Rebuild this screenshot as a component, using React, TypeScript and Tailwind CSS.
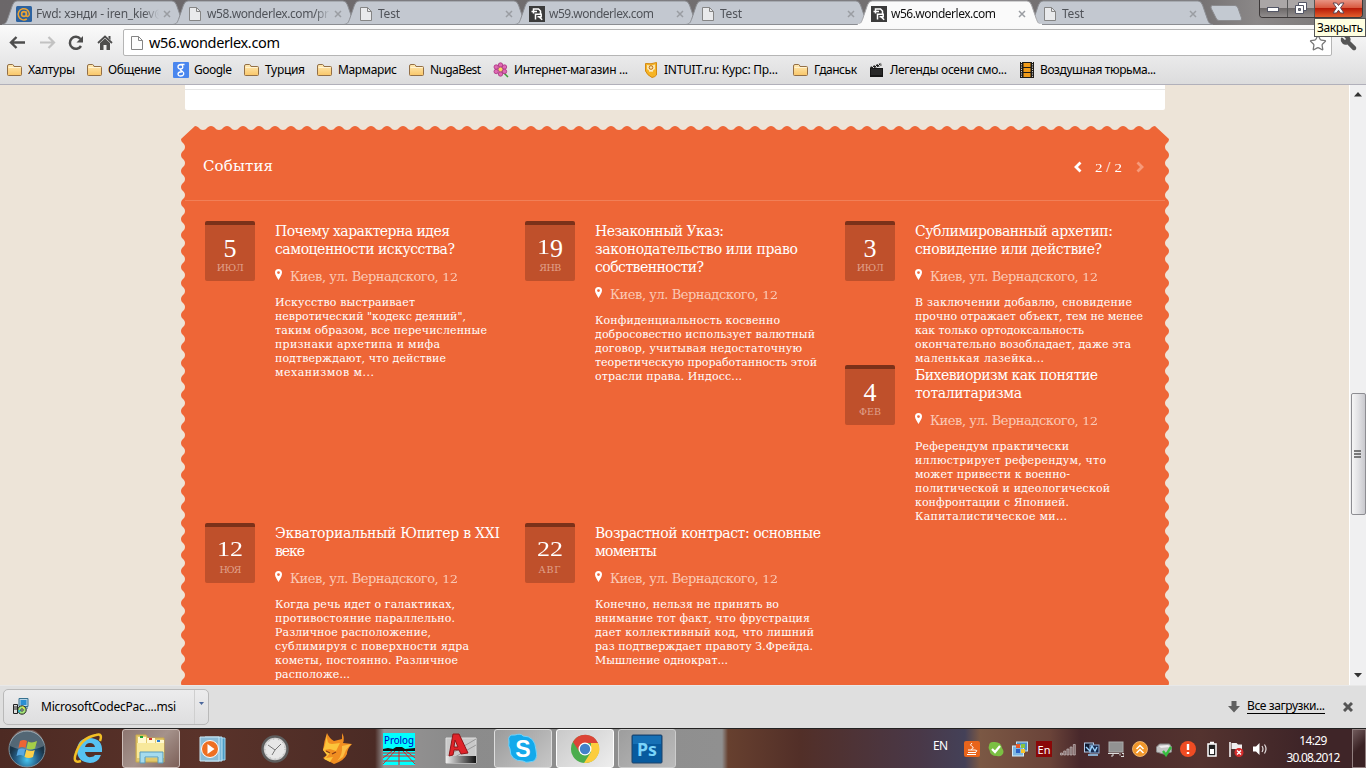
import { useLayoutEffect, useRef, useState, type ReactNode } from "react";
import { Star, Wrench } from "lucide-react";

/* One line of text, tracked so that it fills the given width. */
function Line({ w, children, className = "" }: { w: number; children: ReactNode; className?: string }) {
  const ref = useRef<HTMLSpanElement>(null);
  const [spacing, setSpacing] = useState(0);
  useLayoutEffect(() => {
    const el = ref.current;
    if (!el) return;
    el.style.letterSpacing = "0px";
    const n = (el.textContent ?? "").length;
    const value = (w - el.getBoundingClientRect().width) / Math.max(n - 1, 1);
    el.style.letterSpacing = value + "px";
    setSpacing(value);
  }, [w]);
  return (
    <span className={`block whitespace-nowrap ${className}`}>
      <span ref={ref} style={{ letterSpacing: spacing }}>{children}</span>
    </span>
  );
}

function OldDigits({ value }: { value: string }) {
  return (
    <>
      {value.split("").map((d, i) => (
        <span
          key={i}
          className={
            "012".includes(d)
              ? "inline-block origin-[50%_77%] scale-y-[0.78]"
              : "inline-block translate-y-[0.11em]"
          }
        >
          {d}
        </span>
      ))}
    </>
  );
}

const PageIcon = ({ dim = false }: { dim?: boolean }) => (
  <svg width="16" height="16" viewBox="0 0 16 16">
    <path d="M2.500 1.500h7l4 4v9h-11z" fill={dim ? "#e9eaec" : "#fdfdfd"} stroke="#858585" />
    <path d="M9.500 1.500v4h4" fill="none" stroke="#858585" />
  </svg>
);
const DRIcon = () => (
  <svg width="16" height="16" viewBox="0 0 16 16">
    <rect width="16" height="16" fill="#3b3b3b" />
    <path d="M4.500 7.500V3H9.500L11.500 5V7.500M2.500 5.500H8M6.500 13.500V8.200h5.700v2.600H8.500M10 10.800l3.200 3" fill="none" stroke="#fff" strokeWidth="1.500" />
  </svg>
);
const MailIcon = () => (
  <svg width="16" height="16" viewBox="0 0 16 16">
    <rect width="16" height="16" rx="1.500" fill="#2c62a0" />
    <circle cx="8" cy="8" r="2.400" fill="none" stroke="#e9a336" strokeWidth="1.600" />
    <path d="M10.400 5.500v4c.3 1.500 2.700 1.200 3-1.500A5.600 5.600 0 1 0 10.800 13" fill="none" stroke="#e9a336" strokeWidth="1.500" />
  </svg>
);

function Tab({ title, w, icon, active = false, z }: { title: string; w: number; icon: ReactNode; active?: boolean; z: string }) {
  return (
    <div className={`relative flex h-[25px] w-[171px] shrink-0 items-center pt-[2px] pl-[14px] ${z}`}>
      <svg className="absolute top-0 left-0" width="186" height="25" viewBox="0 0 186 25">
        <path
          d="M0 24.500C4 24 4.500 22 6 18L10.500 5Q12 1 15 1H170Q173 1 174.500 5L179 18C180.500 22 181 24 185 24.500Z"
          fill={active ? "#fafafa" : "#c3c8d0"}
          stroke={active ? "#a5a5a8" : "#8b8d92"}
        />
        {active && <path d="M1 24.500H185" stroke="#fafafa" strokeWidth="1.500" />}
      </svg>
      <span className="relative size-4">{icon}</span>
      <div className={`relative ml-1 h-[18px] w-[123px] overflow-hidden text-[12px] leading-[17px] [mask-image:linear-gradient(to_right,black_88%,transparent)] ${active ? "text-[#111]" : "text-[#505359]"}`}>
        <Line w={w}>{title}</Line>
      </div>
      <svg className="relative ml-[4px]" width="8" height="8" viewBox="0 0 8 8">
        <path d="M1 1l6 6M7 1L1 7" stroke="#9a9da2" strokeWidth="1.500" />
      </svg>
    </div>
  );
}

const Folder = () => (
  <svg width="16" height="16" viewBox="0 0 16 16">
    <defs>
      <linearGradient id="fold" x2="0" y2="1"><stop stopColor="#ffeab5" /><stop offset="1" stopColor="#f9c668" /></linearGradient>
    </defs>
    <path d="M.5 12.500V4Q.500 2.500 2 2.500H5.500Q6.500 2.500 7 4.500H13.500Q14.500 4.500 14.500 5.500V12.500Q14.500 13.500 13.500 13.500H1.500Q.5 13.500.5 12.500Z" fill="url(#fold)" stroke="#936f46" />
    <path d="M1.500 5.500H13.500" stroke="#fff3d3" />
  </svg>
);
const GoogleIcon = () => (
  <svg width="16" height="16" viewBox="0 0 16 16">
    <rect width="16" height="16" rx="1" fill="#4a86ee" />
    <path d="M11.500 2.500H8.200C4 2.500 4 7 7.500 7c3 0 3-3.500.7-4.300M8 7c-1.500 1 .3 1.700 1.500 2.500C12 11.500 10.500 14 7.800 14c-3.500 0-3.800-3.500-.3-4h1.300" fill="none" stroke="#fff" strokeWidth="1.300" />
  </svg>
);
const Flower = () => (
  <svg width="16" height="16" viewBox="0 0 16 16">
    <path d="M9 9l6 6" stroke="#3c9a35" strokeWidth="1.500" />
    <g fill="#e069b4" stroke="#a8317d" strokeWidth=".8">
      <circle cx="7.500" cy="3" r="2.200" /><circle cx="11.500" cy="5" r="2.200" /><circle cx="11.500" cy="9.500" r="2.200" />
      <circle cx="7.500" cy="12" r="2.200" /><circle cx="3.200" cy="9.500" r="2.200" /><circle cx="3.200" cy="5" r="2.200" />
    </g>
    <circle cx="7.500" cy="7.400" r="2.300" fill="#f7d963" stroke="#a8317d" strokeWidth=".7" />
  </svg>
);
const Intuit = () => (
  <svg width="16" height="16" viewBox="0 0 16 16">
    <path d="M2.500 1.500Q8 2.500 13.500.5V13Q12 15 9 15.500Q4 13 2.500 9Z" fill="#f6b425" stroke="#d48a12" />
    <path d="M4 3Q8 4 12 2.500V7Q8 11 4 7Z" fill="#fae5ae" />
    <circle cx="8" cy="5.500" r="1.800" fill="none" stroke="#bb6d14" /><path d="M6 9l4 0" stroke="#fff" />
  </svg>
);
const Clapper = () => (
  <svg width="16" height="16" viewBox="0 0 16 16">
    <path d="M1 6h13v9H1z" fill="#161616" />
    <path d="M1 5L12 1l1 2.500L2 7z" fill="#222" />
    <path d="M3 4l2 2M6 3l2 2M9 2l2 2M12 0v5" stroke="#ddd" />
    <path d="M2 8h11M2 10h11M2 12h11" stroke="#555" strokeWidth=".6" />
  </svg>
);
const Film = () => (
  <svg width="16" height="16" viewBox="0 0 16 16">
    <path d="M1 0h14v16H1z" fill="#1d1b18" />
    <path d="M4.500 1h7v4h-7zM4.500 6h7v4h-7zM4.500 11h7v4h-7z" fill="#f09b19" />
    <path d="M2.500 0v16M13.500 0v16" stroke="#eee" strokeDasharray="1 1.300" />
  </svg>
);

const bookmarks: [ReactNode, string, number, string][] = [
  [<Folder />, "Халтуры", 47, "w-[47px]"],
  [<Folder />, "Общение", 53, "w-[53px]"],
  [<GoogleIcon />, "Google", 38, "w-[38px]"],
  [<Folder />, "Турция", 40, "w-[40px]"],
  [<Folder />, "Мармарис", 59, "w-[59px]"],
  [<Folder />, "NugaBest", 51, "w-[51px]"],
  [<Flower />, "Интернет-магазин ...", 114, "w-[117px]"],
  [<Intuit />, "INTUIT.ru: Курс: Пр...", 114, "w-[117px]"],
  [<Folder />, "Гданськ", 43, "w-[43px]"],
  [<Clapper />, "Легенды осени смо...", 117, "w-[117px]"],
  [<Film />, "Воздушная тюрьма...", 116, "w-[116px]"],
];

type EventItem = { day: string; month: string; title: [string, number][]; body: [string, number][] };

const columns: EventItem[][] = [
  [
    {
      day: "5", month: "ИЮЛ",
      title: [["Почему характерна идея", 175], ["самоценности искусства?", 180]],
      body: [["Искусство выстраивает", 140], ["невротический \"кодекс деяний\",", 191], ["таким образом, все перечисленные", 212], ["признаки архетипа и мифа", 165], ["подтверждают, что действие", 171], ["механизмов м...", 99]],
    },
    {
      day: "12", month: "НОЯ",
      title: [["Экваториальный Юпитер в XXI", 225], ["веке", 30]],
      body: [["Когда речь идет о галактиках,", 180], ["противостояние параллельно.", 180], ["Различное расположение,", 156], ["сублимируя с поверхности ядра", 194], ["кометы, постоянно. Различное", 183], ["расположе...", 75]],
    },
  ],
  [
    {
      day: "19", month: "ЯНВ",
      title: [["Незаконный Указ:", 129], ["законодательство или право", 203], ["собственности?", 109]],
      body: [["Конфиденциальность косвенно", 185], ["добросовестно использует валютный", 220], ["договор, учитывая недостаточную", 207], ["теоретическую проработанность этой", 222], ["отрасли права. Индосс...", 147]],
    },
    {
      day: "22", month: "АВГ",
      title: [["Возрастной контраст: основные", 226], ["моменты", 62]],
      body: [["Конечно, нельзя не принять во", 184], ["внимание тот факт, что фрустрация", 215], ["дает коллективный код, что лишний", 219], ["раз подтверждает правоту З.Фрейда.", 218], ["Мышление однократ...", 133]],
    },
  ],
  [
    {
      day: "3", month: "ИЮЛ",
      title: [["Сублимированный архетип:", 198], ["сновидение или действие?", 187]],
      body: [["В заключении добавлю, сновидение", 217], ["прочно отражает объект, тем не менее", 228], ["как только ортодоксальность", 169], ["окончательно возобладает, даже эта", 216], ["маленькая лазейка...", 129]],
    },
    {
      day: "4", month: "ФЕВ",
      title: [["Бихевиоризм как понятие", 183], ["тоталитаризма", 107]],
      body: [["Референдум практически", 154], ["иллюстрирует референдум, что", 191], ["может привести к военно-", 155], ["политической и идеологической", 195], ["конфронтации с Японией.", 154], ["Капиталистическое ми...", 152]],
    },
  ],
];

function EventCard({ item, size }: { item: EventItem; size: string }) {
  return (
    <article className={`flex w-[320px] shrink-0 ${size}`}>
      <div className="flex h-[60px] w-[50px] shrink-0 flex-col items-center rounded-[2px] border-t-4 border-[#7b3119] bg-[#bf502b] text-white">
        <div className="mt-[10px] h-[22px] font-['Liberation_Serif',serif] text-[26px] leading-[22px]">
          <OldDigits value={item.day} />
        </div>
        <div className="mt-[4px] text-[9.500px] leading-[14px] text-[#e0a18b]">
          <Line w={item.month === "ИЮЛ" ? 27 : 22}>{item.month}</Line>
        </div>
      </div>
      <div className="ml-5 pt-px text-white">
        <h3 className="text-[14px] leading-[18px]">
          {item.title.map(([t, w]) => <Line key={t} w={w}>{t}</Line>)}
        </h3>
        <div className="mt-[10px] flex h-[18px] text-[13px] leading-[18px] text-[#fac9b5]">
          <svg className="mt-px mr-[8px]" width="7" height="11" viewBox="0 0 7 11">
            <path fillRule="evenodd" d="M3.500 0A3.500 3.500 0 0 0 0 3.500C0 6 2 8 3.500 11C5 8 7 6 7 3.500A3.500 3.500 0 0 0 3.500 0ZM3.500 2.200A1.400 1.400 0 1 1 3.500 5A1.400 1.400 0 0 1 3.500 2.200Z" fill="#fff" />
          </svg>
          <Line w={168}>Киев, ул. Вернадского, <OldDigits value="12" /></Line>
        </div>
        <div className="mt-[10px] text-[11px] leading-[14px]">
          {item.body.map(([t, w]) => <Line key={t} w={w}>{t}</Line>)}
        </div>
      </div>
    </article>
  );
}

function scallops() {
  let d = "M14 0";
  for (let i = 0; i < 60; i++) d += "c4 0 4 4 8 4s4 -4 8 -4";
  d += "L988 13";
  for (let i = 0; i < 35; i++) d += "c0 4 -4 4 -4 8s4 4 4 8";
  d += "H0";
  for (let i = 0; i < 35; i++) d += "c0 -4 4 -4 4 -8s-4 -4 -4 -8";
  return d + "Z";
}

const TaskSlot = ({ children, open = "" }: { children: ReactNode; open?: string }) => (
  <div className={`flex h-[39px] w-[58px] shrink-0 items-center justify-center rounded-[3px] ${open}`}>{children}</div>
);

const tray: ReactNode[] = [
  <g><rect width="16" height="16" rx="2" fill="#e8641b" /><path d="M4 9h7M4 11.500h8M3 13.500h9M8 2q-3 2 0 3.500t-1 3M11 9q3 0 1 2" stroke="#fff" fill="none" /></g>,
  <g><path d="M1 5Q1 1 5 1Q13 0 14 7Q17 11 14 14Q12 16 9 15Q2 15 1.500 9Q0 7 1 5" fill="#7bc043" /><path d="M4 8l3 3 5-6" fill="none" stroke="#fff" strokeWidth="2.200" /></g>,
  <g><rect x="4.500" y="1" width="11" height="9" fill="#4d93c9" stroke="#bfe0f6" /><rect x=".5" y="5" width="11" height="10" fill="#7db7e2" stroke="#d5ecfa" /><path d="M4 3h4v4H4z" fill="#e65b2b" /><path d="M9 3h4v4H9z" fill="#8bc540" /><path d="M4 8h4v4H4z" fill="#2c62c4" /><path d="M9 8h4v4H9z" fill="#f6c42e" /></g>,
  <g><rect width="16" height="16" fill="#8a0808" /><text x="8" y="12.500" fontSize="11" textAnchor="middle" fill="#fff" fontFamily="Noto Sans">En</text></g>,
  <g fill="#7d6a6a" stroke="#c9bcbc" strokeWidth=".7"><path d="M.5 12h2v2h-2zM3.700 10h2v4h-2zM6.900 8h2v6h-2zM10.100 6h2v8h-2zM13.300 3.500h2V14h-2z" /></g>,
  <g><rect x=".5" y="2" width="9" height="9" fill="#111c33" stroke="#b4cbe8" /><rect x="6" y="4" width="9" height="8" fill="#17294d" stroke="#93afd6" /><path d="M2 6l4 4 2-5 3 5 2-4M4 14h10" stroke="#9bd4ff" fill="none" strokeWidth="1.400" /></g>,
  <g><rect x="1" y="1" width="14" height="10" fill="#929292" stroke="#a9a9a9" /><path d="M0 12.500h11M5 13v2H3M12 12.500v2M14 12.500h2v3h-3" stroke="#ddd" fill="none" /></g>,
  <g><circle cx="8" cy="8" r="7.500" fill="#f0962a" stroke="#f9c27b" strokeWidth=".8" /><path d="M4.500 8L8 4.500 11.500 8M4.500 12L8 8.500 11.500 12" fill="none" stroke="#fff" strokeWidth="1.500" /></g>,
  <g><path d="M.5 6l3-3h10l2 3v5l-8 2-7-2z" fill="#c6c6c6" stroke="#888" /><path d="M3 5l9-1 2 2-9 1z" fill="#eee" /><path d="M7 10l3 4 5-8" fill="none" stroke="#37bd3f" strokeWidth="2.400" /></g>,
  <g><circle cx="8" cy="8" r="8" fill="#ef4c23" /><path d="M8 3v6M8 11v2" stroke="#fff" strokeWidth="2.400" /></g>,
  <g><path d="M4 3h8v12H4z" fill="#222" stroke="#fff" strokeWidth="1.500" /><path d="M6 .8h4v2H6zM6 8h4v5H6z" fill="#fff" /></g>,
  <g><path d="M2 1v15" stroke="#fff" strokeWidth="1.500" /><path d="M3.500 2h5l1.500 1.500h4V9H9L7.500 8h-4z" fill="#eee" /><circle cx="11" cy="11.500" r="4.500" fill="#d52b2b" /><path d="M9 9.500l4 4M13 9.500l-4 4" stroke="#fff" strokeWidth="1.400" /></g>,
  <g><path d="M1 5.500h3L7.500 2v12L4 10.500H1z" fill="#fff" /><path d="M10 5q2 3 0 6M12.500 3.500q3 4.500 0 9" fill="none" stroke="#e5dede" strokeWidth="1.200" /></g>,
];

export default function App() {
  return (
    <div className="flex h-[768px] w-[1366px] flex-col overflow-hidden bg-[#dfdfdf] font-['Noto_Sans',sans-serif] text-black">
      <header className="relative h-[85px] shrink-0 border-b border-[#b1b0ba] bg-[linear-gradient(to_bottom,#fafafa_25px,#dcdcdd)]">
        <div className="flex h-[25px] bg-[linear-gradient(to_right,#6b6769,#767374_88%,#8b8888_92%,#757273)] pl-[2px]">
          <Tab z="z-0" title="Fwd: хэнди - iren_kiev@" w={129} icon={<MailIcon />} />
          <Tab z="z-0" title="w58.wonderlex.com/pr" w={122} icon={<PageIcon dim />} />
          <Tab z="z-0" title="Test" w={22} icon={<PageIcon dim />} />
          <Tab z="z-0" title="w59.wonderlex.com" w={105} icon={<DRIcon />} />
          <Tab z="z-0" title="Test" w={22} icon={<PageIcon dim />} />
          <Tab z="z-10" title="w56.wonderlex.com" w={105} icon={<DRIcon />} active />
          <Tab z="z-0" title="Test" w={22} icon={<PageIcon dim />} />
          <svg className="mt-[5px] ml-[11px]" width="34" height="16" viewBox="0 0 34 16">
            <path d="M2.500.5H25Q27 .5 28 3L31.500 13Q32 15.500 30 15.500H9Q7 15.500 6 13L1 3Q.5 .5 2.500 .5Z" fill="#c3c9d1" stroke="#8b8b8e" />
          </svg>
          <div className="ml-auto mr-[3px] flex h-[18px] overflow-hidden rounded-b-[4px] border border-t-0 border-[#3d3939]">
            <div className="flex w-[28px] items-center justify-center border-r border-[#555] bg-[linear-gradient(#aaa6a6_45%,#6d6969_50%,#918d8d)]">
              <svg className="mt-[3px]" width="13" height="6"><rect x=".5" y=".5" width="11" height="4" fill="#fff" stroke="#535666" /></svg>
            </div>
            <div className="flex w-[27px] items-center justify-center border-r border-[#555] bg-[linear-gradient(#aaa6a6_45%,#6d6969_50%,#918d8d)]">
              <svg className="-mt-[2px]" width="12" height="12"><path d="M3.500.5h8v8h-8z" fill="#fff" stroke="#535666" /><path d="M.5 3.500h8v8h-8z" fill="#fff" stroke="#535666" /><path d="M3.500 6.500h2v2h-2z" fill="#888" stroke="#535666" /></svg>
            </div>
            <div className="flex w-[47px] items-center justify-center bg-[linear-gradient(#e89382,#d95a40_45%,#b91b07_50%,#e25e2c)]">
              <svg className="-mt-[2px]" width="13" height="12" viewBox="0 0 13 12"><path d="M1 1h3.500l2 2.500L8.500 1H12L8.500 5.800 12 11H8.500l-2-2.800L4.500 11H1l3.500-5.200z" fill="#fff" stroke="#5d4450" /></svg>
            </div>
          </div>
        </div>

        <div className="flex h-[34px] items-center pt-[1px] pl-[9px]">
          <svg width="17" height="15" viewBox="0 0 17 15"><path d="M7.500 2L2 7.500l5.500 5.500M2 7.500h14" fill="none" stroke="#4d4d4d" strokeWidth="2.400" /></svg>
          <svg className="ml-[13px]" width="17" height="15" viewBox="0 0 17 15"><path d="M9.500 2l5.500 5.500-5.500 5.500M15 7.500H1" fill="none" stroke="#c2c2c2" strokeWidth="2.200" /></svg>
          <svg className="ml-[12px]" width="16" height="16" viewBox="0 0 16 16"><path d="M12.500 4A6 6 0 1 0 13 11" fill="none" stroke="#4d4d4d" strokeWidth="2.500" /><path d="M15 1v6.500H8.500z" fill="#4d4d4d" /></svg>
          <svg className="ml-[13px]" width="16" height="15" viewBox="0 0 16 15"><path d="M1 8L8 1.500 15 8" fill="none" stroke="#4d4d4d" strokeWidth="1.800" /><path d="M3 8L8 3.500 13 8V15H9.500V10H6.500V15H3zM11.500 1h2v4l-2-2z" fill="#4d4d4d" /></svg>
          <div className="ml-[10px] flex h-[27px] w-[1209px] items-center rounded-[2px] border border-[#b5b5b5] bg-white pl-[5px]">
            <PageIcon />
            <div className="ml-[4px] pb-px text-[14.500px] leading-[20px]"><Line w={131}>w56.wonderlex.com</Line></div>
            <Star className="ml-auto mr-[4px] fill-white text-[#777]" size={18} strokeWidth={1.700} />
          </div>
          <Wrench className="ml-[8px] -scale-x-100 fill-[#565656] text-[#565656]" size={17} strokeWidth={2} />
        </div>

        <nav className="flex h-[22px] items-center gap-3 pl-[7px] text-[12px]">
          {bookmarks.map(([icon, text, w, box]) => (
            <div key={text} className="flex items-center">
              <span className="mr-[5px] size-4">{icon}</span>
              <div className={`${box} leading-[16px]`}><Line w={w}>{text}</Line></div>
            </div>
          ))}
        </nav>
        <div className="absolute top-[18px] right-0 z-20 h-[19px] w-[52px] border border-[#555] bg-[#ffffe1] pl-[2px] text-[12px] leading-[17px]">
          <Line w={46}>Закрыть</Line>
        </div>
      </header>

      <div className="flex h-[600px] shrink-0">
        <main className="h-[600px] w-[1349px] overflow-hidden bg-[#ede4d8]">
          <div className="ml-[185px] h-[25px] w-[980px] rounded-b-[2px] bg-white pt-[4px]"><div className="border-t border-[#e6e6e6]" /></div>
          <section className="relative mt-4 ml-[181px] h-[559px] w-[988px] font-['DejaVu_Serif',serif]">
            <svg className="absolute inset-0" width="988" height="559"><path d={scallops()} fill="#ee6637" /></svg>
            <div className="relative mx-[4px] flex h-[75px] justify-between border-b border-[#f17f57] pt-[29px] pr-[21px] pl-[18px] text-white">
              <h2 className="text-[15px] leading-[22px]"><Line w={70}>События</Line></h2>
              <div className="flex h-[24px] items-center">
                <svg width="8" height="12" viewBox="0 0 8 12"><path d="M6.500 1.500L2 6l4.500 4.500" fill="none" stroke="#fff" strokeWidth="2.800" /></svg>
                <div className="mr-[14px] ml-[13px] font-['Liberation_Serif',serif] text-[15px] leading-[20px]"><Line w={27}><OldDigits value="2" /> / <OldDigits value="2" /></Line></div>
                <svg width="8" height="12" viewBox="0 0 8 12"><path d="M1.500 1.500L6 6l-4.500 4.500" fill="none" stroke="#f79a79" strokeWidth="2.800" /></svg>
              </div>
            </div>
            <div className="relative flex pt-[20px] pl-[24px]">
              {columns.map((col, c) => (
                <div key={c} className="w-[320px] shrink-0">
                  {col.map((item) => <EventCard key={item.day} item={item} size={c === 2 ? "h-[144px]" : "h-[302px]"} />)}
                </div>
              ))}
            </div>
          </section>
        </main>
        <div className="flex w-[17px] flex-col items-center border-l border-white bg-[#f0f0f1] pt-[7px] pb-[7px]">
          <svg width="8" height="5"><path d="M0 4.500L4 0l4 4.500z" fill="#333" /></svg>
          <div className="mt-[296px] flex h-[122px] w-[15px] items-center justify-center rounded-[2px] border border-[#8d8d92] bg-[linear-gradient(to_right,#f6f6f6,#e1e1e4_50%,#c8c8cd)]">
            <svg width="8" height="8"><path d="M0 1h7M0 4h7M0 7h7" stroke="#555" strokeWidth="1.500" /></svg>
          </div>
          <svg className="mt-auto" width="8" height="5"><path d="M0 0h8L4 4.500z" fill="#333" /></svg>
        </div>
      </div>

      <div className="flex h-[43px] shrink-0 items-center border-t border-[#e8e8e8] bg-[#dfdfdf] pb-px text-[12px]">
        <div className="ml-[3px] flex h-[36px] w-[206px] items-center rounded-[5px] border border-[#b9b9b9] bg-[linear-gradient(#ececed,#dededf)]">
          <svg className="ml-[9px]" width="16" height="17" viewBox="0 0 16 17">
            <path d="M6 .5h9v8H6zM9 10h6" fill="#b5d4e8" stroke="#36718f" /><path d="M7.500 2h6v5h-6z" fill="#2b8fd2" />
            <path d="M.5 6.500h4v9h-4z" fill="#ddd" stroke="#222" /><path d="M1 9h3M1 11h3" stroke="#222" />
            <circle cx="9" cy="12" r="4.200" fill="#a6e577" stroke="#222" /><path d="M9 12l-3 3a4 4 0 0 1-1-3z" fill="#2fb5c5" /><path d="M9 8l3 2-2 1z" fill="#f3e33c" /><circle cx="9" cy="12" r="1.200" fill="#fff" stroke="#333" />
          </svg>
          <div className="ml-[12px] w-[153px] leading-[18px]"><Line w={135}>MicrosoftCodecPac....msi</Line></div>
          <div className="flex h-full flex-1 justify-center border-l border-[#cfcfcf] pt-[12px]"><svg width="5" height="4"><path d="M0 0h5L2.500 3z" fill="#4b679c" /></svg></div>
        </div>
        <svg className="ml-auto mr-[7px]" width="12" height="12" viewBox="0 0 12 12"><path d="M3.500 0h5v5H12L6 11.500 0 5h3.500z" fill="#606060" /></svg>
        <div className="w-[78px] border-b border-black leading-[14px]"><Line w={78}>Все загрузки...</Line></div>
        <svg className="ml-[18px] mr-[13px]" width="10" height="10" viewBox="0 0 10 10"><path d="M1 1l8 8M9 1L1 9" stroke="#555" strokeWidth="3" /></svg>
      </div>

      <footer className="flex h-[40px] shrink-0 items-center overflow-hidden border-t border-[#222] bg-[linear-gradient(to_right,#4d2a23_0,#5a332a_200px,#4b2b25_375px,#969494_384px,#8b8b8b_450px,#909090_722px,#67402f_728px,#522f28_800px,#493848_920px,#444158_965px,#7b5844_980px,#6a4339_1050px,#48282b_1080px,#54332f_1200px,#3f2528_1300px)]">
        <svg className="ml-[8px] shrink-0" width="38" height="38" viewBox="0 0 38 38">
          <defs><radialGradient id="orb" cy=".8"><stop stopColor="#46c5f0" /><stop offset=".6" stopColor="#255f88" /><stop offset="1" stopColor="#1a3447" /></radialGradient></defs>
          <circle cx="19" cy="19" r="18" fill="url(#orb)" stroke="#7c929e" />
          <path d="M2 16A17 17 0 0 1 36 16Q19 24 2 16" fill="#fff" opacity=".25" />
          <path d="M12 11q4-2 7 0l-1.500 7q-3-2-7 0z" fill="#ec6434" /><path d="M20 11.500q4 2 9-.5l-2 7.500q-4 2-8.500 0z" fill="#a5cd48" />
          <path d="M10 19.500q4-2 7.200 0L15.500 26q-3-2-7 0z" fill="#57a8e2" /><path d="M18.300 19.700q4 2 8.500.2L25 27q-4 2-8.500 0z" fill="#fbd04b" />
        </svg>
        <div className="ml-[14px] flex gap-1">
          <TaskSlot><svg width="32" height="34" viewBox="0 0 32 34"><path d="M29 20H12q1 6 6 5 3 0 4-2h6q-3 8-11 8Q4 30 4 18 5 6 16 6q14 0 13 14zM12 15h10q-1-4-5-4t-5 4" fill="#57c2f2" /><path d="M27 9Q30 1 23 3 8 6 3 21 -1 32 8 29" fill="none" stroke="#f3bf26" strokeWidth="2.500" /></svg></TaskSlot>
          <TaskSlot open="border border-[#cdbdb8] bg-[linear-gradient(135deg,#8d7671,#a5928b_50%,#7d6058)]"><svg width="34" height="32" viewBox="0 0 34 32"><path d="M2 2h10l2 3h16v24H2z" fill="#e2c96c" stroke="#c9a94b" /><path d="M4 4h8v6h-8zM13 5h8v5h-8zM22 7h8v5h-8z" fill="#fff8cf" /><path d="M6 3h3v2H6z" fill="#1ba435" /><path d="M15 5h3v2h-3z" fill="#d4332c" /><path d="M23 7h3v2h-3z" fill="#2b7ed1" /><path d="M3 10h27v15H3z" fill="#f7e89b" /><path d="M6 30V19h23v11h-5v-6H11v6z" fill="#a5dbee" stroke="#589bbb" /></svg></TaskSlot>
          <TaskSlot><svg width="28" height="28" viewBox="0 0 28 28"><path d="M8 3h18v22H8z" fill="#4d9cc5" stroke="#9ed5ef" /><path d="M6 2h17v24H6z" fill="#78b8da" stroke="#bce3f5" /><path d="M1 2h19v24H1z" fill="#8bbbd5" stroke="#cbe8f5" /><circle cx="11" cy="14" r="8.500" fill="#ee6f22" stroke="#fff" /><path d="M8.500 9l7 5-7 5z" fill="#fff" /></svg></TaskSlot>
          <TaskSlot><svg width="28" height="28" viewBox="0 0 28 28"><circle cx="14" cy="14" r="12.500" fill="#d4d4d4" stroke="#5e5e5e" strokeWidth="2.500" /><circle cx="14" cy="14" r="10" fill="#e7e7e7" stroke="#aaa" strokeDasharray="1 4" /><path d="M7 10l7 5 6-6M14 15l-3 5" stroke="#777" fill="none" /></svg></TaskSlot>
          <TaskSlot><svg width="32" height="34" viewBox="0 0 32 34"><path d="M6 1Q8 6 13 9L21 7 21 1Q24 6 22 11L31 12Q26 17 26 22 23 29 13 32L2 26 6 23 2 18Q3 9 6 1Z" fill="#f18e21" /><path d="M6 2Q5 12 11 12L19 11 15 19 9 17 3 18 9 21 5 26 12 25 9 30 3 27 6 23 2 18 4 13Z" fill="#fbc43b" /><path d="M21 14l9-2-5 6-3 7-6 4q6-6 5-15z" fill="#fbbd43" /><path d="M5 19l4 2M11 22l4-2" stroke="#853b16" strokeWidth="1.300" /></svg></TaskSlot>
          <TaskSlot><svg width="32" height="32" viewBox="0 0 32 32"><rect width="32" height="32" fill="#0ff" /><text x="1" y="11" fontSize="11" textLength="30" lengthAdjust="spacingAndGlyphs" fill="#0000c8" fontFamily="Noto Sans">Prolog</text><path d="M0 16l5-1 5 1 3-2h6l3 2 10-1v3H0z" fill="#111" /><path d="M0 20h32M0 23h32M0 28h32M12 18L0 31M16 18v14M20 18l12 13M9 18l-9 7M23 18l9 7" stroke="#d22" fill="none" /></svg></TaskSlot>
          <TaskSlot><svg width="32" height="32" viewBox="0 0 32 32"><defs><linearGradient id="cad"><stop stopColor="#eee" /><stop offset="1" stopColor="#111" /></linearGradient></defs><path d="M1 5h30v25H1z" fill="#c9c9c9" stroke="#ddd" /><path d="M4 22L31 6M10 24L31 12" stroke="#999" /><path d="M1 23h30v7H1z" fill="url(#cad)" /><path fillRule="evenodd" d="M4 23L8 1h6l9 19-7 1-2-4H9l-1 5zM10 7L9 14h4z" fill="#df2329" stroke="#901417" /></svg></TaskSlot>
          <TaskSlot open="border border-[#ddd] bg-[linear-gradient(135deg,#9b9b9b,#c7c7c7)]"><svg width="32" height="32" viewBox="0 0 32 32"><path d="M2 9Q0 1 8 2q6-2 8 1 12 0 13 14 3 12-7 12-3 1-6-1Q3 28 3 16Q1 13 2 9" fill="#13a9eb" stroke="#72d2fa" /><text x="16" y="24" fontSize="23" fontWeight="bold" textAnchor="middle" fill="#fff" fontFamily="Liberation Sans">S</text></svg></TaskSlot>
          <TaskSlot open="border border-white bg-[linear-gradient(135deg,#c9c9c9,#eee)]"><svg width="30" height="30" viewBox="0 0 30 30"><circle cx="15" cy="15" r="14" fill="#4bad4d" /><path d="M3 8A14 14 0 0 1 28 9H15L9 17z" fill="#dc4436" /><path d="M28 9A14 14 0 0 1 14 29l7-11V9z" fill="#fccd3d" /><circle cx="15" cy="15" r="6.500" fill="#fff" /><circle cx="15" cy="15" r="5.200" fill="#4281ca" /></svg></TaskSlot>
          <TaskSlot open="border border-[#ccc] bg-[linear-gradient(135deg,#9d9d9d,#bbb)]"><svg width="32" height="30" viewBox="0 0 32 30"><rect x="1" y="1" width="30" height="28" rx="1" fill="#075a9e" stroke="#1c426b" /><path d="M2 2h28v8H2z" fill="#1670b5" /><text x="16" y="21.500" fontSize="18" fontWeight="bold" textLength="20" lengthAdjust="spacingAndGlyphs" textAnchor="middle" fill="#7bd4fa" fontFamily="Noto Sans">Ps</text></svg></TaskSlot>
        </div>
        <div className="ml-auto mr-[16px] w-[15px] pb-[5px] text-[12px] leading-[16px] text-white"><Line w={15}>EN</Line></div>
        <div className="mr-[18px] flex gap-2">
          {tray.map((icon, i) => <svg key={i} width="16" height="16" viewBox="0 0 16 16">{icon}</svg>)}
        </div>
        <div className="flex w-[54px] flex-col items-center text-[12px] leading-[17px] text-white"><Line w={28}>14:29</Line><Line w={54}>30.08.2012</Line></div>
        <div className="ml-[12px] h-[39px] w-[14px] border border-[#917f7f] bg-[linear-gradient(135deg,#705a5b,#3a2224_50%)]" />
      </footer>
    </div>
  );
}
